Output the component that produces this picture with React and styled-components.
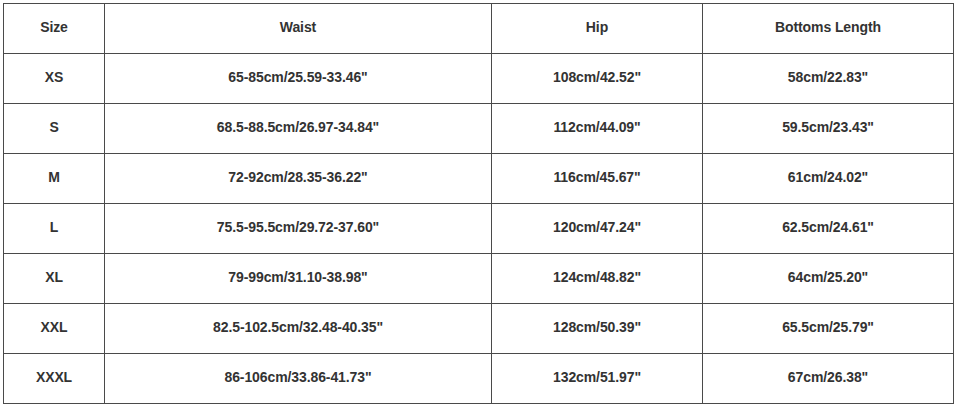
import React from "react";
import styled, { createGlobalStyle } from "styled-components";

const GlobalStyle = createGlobalStyle`
  body {
    margin: 0;
    background: #fff;
    font-family: "Liberation Sans", Arial, sans-serif;
  }
`;

const rows = [
  ["XS", "65-85cm/25.59-33.46\"", "108cm/42.52\"", "58cm/22.83\""],
  ["S", "68.5-88.5cm/26.97-34.84\"", "112cm/44.09\"", "59.5cm/23.43\""],
  ["M", "72-92cm/28.35-36.22\"", "116cm/45.67\"", "61cm/24.02\""],
  ["L", "75.5-95.5cm/29.72-37.60\"", "120cm/47.24\"", "62.5cm/24.61\""],
  ["XL", "79-99cm/31.10-38.98\"", "124cm/48.82\"", "64cm/25.20\""],
  ["XXL", "82.5-102.5cm/32.48-40.35\"", "128cm/50.39\"", "65.5cm/25.79\""],
  ["XXXL", "86-106cm/33.86-41.73\"", "132cm/51.97\"", "67cm/26.38\""],
];

const widths = [101, 387, 211, 251];

export default function App() {
  return (
    <>
      <GlobalStyle />
      <SizeTable>
        <colgroup>
          {widths.map((w, i) => (
            <col key={i} style={{ width: w }} />
          ))}
        </colgroup>
        <thead>
          <tr>
            <Cell as="th">Size</Cell>
            <Cell as="th">Waist</Cell>
            <Cell as="th">Hip</Cell>
            <Cell as="th">Bottoms Length</Cell>
          </tr>
        </thead>
        <tbody>
          {rows.map((r) => (
            <tr key={r[0]}>
              {r.map((c, i) => (
                <Cell key={i}>{c}</Cell>
              ))}
            </tr>
          ))}
        </tbody>
      </SizeTable>
    </>
  );
}

const SizeTable = styled.table`
  margin: 3px;
  width: 950px;
  border-collapse: collapse;
  table-layout: fixed;
`;

const Cell = styled.td`
  height: 46px;
  padding: 0 0 3px;
  border: 1px solid #4a4a4a;
  text-align: center;
  vertical-align: middle;
  font-size: 14px;
  font-weight: 700;
  letter-spacing: -0.1px;
  color: #333;
`;
